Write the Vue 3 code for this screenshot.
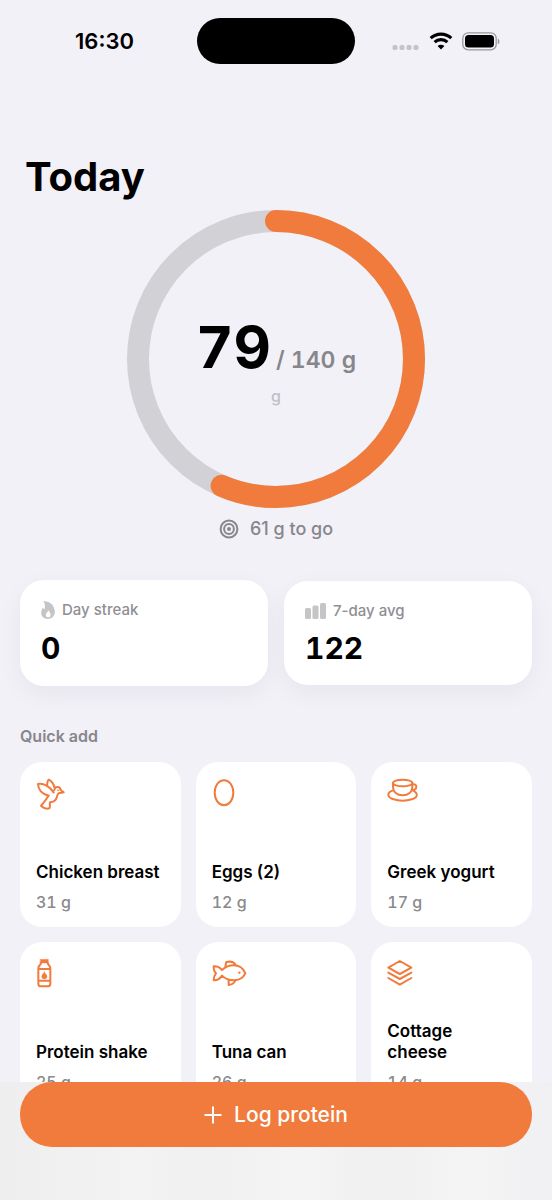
<script setup>
const eaten = 79
const goal = 140
const radius = 138
const circumference = 2 * Math.PI * radius
const dash = `${(circumference * eaten) / goal} ${circumference}`

const foods = [
  { name: 'Chicken breast', grams: 31, icon: 'bird' },
  { name: 'Eggs (2)', grams: 12, icon: 'egg' },
  { name: 'Greek yogurt', grams: 17, icon: 'cup' },
  { name: 'Protein shake', grams: 25, icon: 'bottle' },
  { name: 'Tuna can', grams: 26, icon: 'fish' },
  { name: 'Cottage cheese', grams: 14, icon: 'layers' },
]
</script>

<template>
  <div class="screen">
    <header class="status">
      <time class="clock">16:30</time>
      <div class="island"></div>
      <div class="signals">
        <svg class="dots" viewBox="0 0 28 6" aria-hidden="true">
          <rect x="0.5" y="1" width="5" height="5" rx="1.8" />
          <rect x="7.5" y="1" width="5" height="5" rx="1.8" />
          <rect x="14.5" y="1" width="5" height="5" rx="1.8" />
          <rect x="21.5" y="1" width="5" height="5" rx="1.8" />
        </svg>
        <svg class="wifi" viewBox="0 0 24 18" aria-hidden="true">
          <path d="M1.7 6.2a15 15 0 0 1 20.6 0M5.6 10.2a9.3 9.3 0 0 1 12.8 0" fill="none" stroke="#000" stroke-width="3.1" />
          <path d="M12 17.4 8.6 14a4.9 4.9 0 0 1 6.8 0z" />
        </svg>
        <svg class="battery" viewBox="0 0 38 19" aria-hidden="true">
          <rect x="0.8" y="0.8" width="33.4" height="17" rx="5.4" fill="none" stroke="#98979b" stroke-width="1.3" />
          <rect x="3" y="3" width="29" height="12.6" rx="3.6" />
          <path d="M35.8 6.4c2.2.8 2.2 5 0 5.8z" fill="#98979b" />
        </svg>
      </div>
    </header>

    <main class="content">
      <h1>Today</h1>

      <section class="progress" aria-label="Protein today">
        <div class="ring">
          <svg viewBox="0 0 298 298" aria-hidden="true">
            <circle class="track" cx="149" cy="149" :r="radius" />
            <circle class="fill" cx="149" cy="149" :r="radius" :stroke-dasharray="dash" transform="rotate(-90 149 149)" />
          </svg>
          <div class="reading">
            <p class="amount"><strong>{{ eaten }}</strong><span>/ {{ goal }} g</span></p>
            <p class="unit">g</p>
          </div>
        </div>
        <p class="remaining">
          <svg viewBox="0 0 20 20" aria-hidden="true">
            <circle cx="10" cy="10" r="8.4" />
            <circle cx="10" cy="10" r="4.9" />
            <circle class="bull" cx="10" cy="10" r="2" />
          </svg>
          <span>{{ goal - eaten }} g to go</span>
        </p>
      </section>

      <section class="stats" aria-label="Statistics">
        <article class="stat">
          <p class="label">
            <svg class="flame" viewBox="0 0 14 18" aria-hidden="true">
              <path fill-rule="evenodd" d="M2.4.3C8.3-.3 13.6 4 13.8 10.6 13.9 15 11 17.9 7 17.9S.2 15.3.2 11.7C.2 9.3 1 7.6 2.2 6.4c.3 1 .7 1.5 1.5 1.9C4.2 5.4 4 2.5 2.4.3zM7.5 8.9c-.2 1.7-2.7 2.8-2.7 5a2.4 2.4 0 0 0 4.9.1c0-2.1-1.5-2.9-2.2-5.1z" />
            </svg>
            <span>Day streak</span>
          </p>
          <p class="value">0</p>
        </article>
        <article class="stat average">
          <p class="label">
            <svg class="bars" viewBox="0 0 21 16" aria-hidden="true">
              <rect x="0" y="5" width="6" height="11" rx="1.5" />
              <rect x="7.5" y="2.5" width="6" height="13.5" rx="1.5" />
              <rect x="15" y="0" width="6" height="16" rx="1.5" />
            </svg>
            <span>7-day avg</span>
          </p>
          <p class="value">122</p>
        </article>
      </section>

      <section class="quick">
        <h2>Quick add</h2>
        <div class="foods">
          <button v-for="food in foods" :key="food.name" type="button" class="food">
            <span class="icon">
              <svg v-if="food.icon === 'bird'" class="traced" width="30" height="32" viewBox="50 54 90 96" aria-hidden="true">
                <path d="M88 107C72 103 57 92 56 72c16-4 36 8 47 25M84 76c-1-7 0-13 4-17 9 5 15 12 17 23M105 90c1-11 17-13 19 0l9 7c-5 1-9 1-14 2-5 4-5 7-6 11-3 11-11 16-21 17-2 6 2 13-2 18-8 2-19-1-25-8 9-8 15-19 23-30" />
                <circle class="solid" cx="116" cy="91" r="2" />
              </svg>
              <svg v-else-if="food.icon === 'egg'" width="24" height="30" viewBox="0 0 24 30" aria-hidden="true">
                <path d="M12 2.2c5.2 0 9.3 5.3 9.3 12.500S17.2 27.200 12 27.200 2.700 21.900 2.700 14.700 6.800 2.200 12 2.200z" />
              </svg>
              <svg v-else-if="food.icon === 'cup'" class="traced" width="32" height="26" viewBox="70 54 96 78" aria-hidden="true">
                <ellipse cx="117" cy="69" rx="29" ry="10" />
                <path d="M88 69v10c0 17 12 27 29 27s29-10 29-27V69M146 74c6-3 12 0 12 6 0 7-6 10-14 10M88 91c-20 6-17 21-1 26 18 6 42 6 60 0 16-5 17-18 0-26" />
              </svg>
              <svg v-else-if="food.icon === 'bottle'" class="traced" width="17" height="30" viewBox="80 69 51 90" aria-hidden="true">
                <path class="solid" d="M93 73h24v11H93z" />
                <path d="M95 84c-1 7-8 7-8 16v46c0 5 3 8 8 8h20c5 0 8-3 8-8v-46c0-9-7-9-8-16M87 102h36M87 137h36" />
                <path class="solid" d="M105 110c1 5 8 8 8 14a8 8 0 0 1-16 0c0-6 7-9 8-14z" />
              </svg>
              <svg v-else-if="food.icon === 'fish'" class="traced" width="35" height="30" viewBox="67 71 105 90" aria-hidden="true">
                <path d="M97 107c10-9 21-14 35-14 16 0 28 7 35 24-7 15-19 21-35 21-14 0-25-4-35-14-6 9-14 15-25 14 0-9 2-15 7-21-6-7-8-12-7-21 11-1 19 4 25 11zM107 96l3-13c14-3 25 1 29 11M117 138v14c9-1 17-5 21-15" />
                <circle class="solid" cx="149" cy="115" r="3" />
              </svg>
              <svg v-else class="traced" width="26" height="30" viewBox="67 71 78 90" aria-hidden="true">
                <path d="M105.5 80 140 100l-34.5 19L71 100zM71 115l34.5 19L140 115M71 131l34.5 20L140 131" />
              </svg>
            </span>
            <span class="name">{{ food.name }}</span>
            <span class="grams">{{ food.grams }} g</span>
          </button>
        </div>
      </section>
    </main>

    <footer class="dock">
      <button type="button" class="log">
        <svg viewBox="0 0 18 18" aria-hidden="true"><path d="M9 1.3v15.4M1.3 9h15.4" /></svg>
        <span>Log protein</span>
      </button>
    </footer>
  </div>
</template>

<style>
html,
body {
  background: #f2f1f7;
}
</style>

<style scoped>
.screen {
  display: flex;
  flex-direction: column;
  height: 100vh;
  color: #000;
  background: #f2f1f7;
  font-family: Inter, "Liberation Sans", sans-serif;
}

h1,
h2,
p {
  margin: 0;
}

button {
  border: 0;
  font-family: inherit;
  cursor: pointer;
}

.status {
  flex: none;
  display: grid;
  grid-template-columns: 1fr 158px 1fr;
  align-items: center;
  height: 46px;
  padding-top: 18px;
}

.clock {
  justify-self: center;
  padding-left: 12px;
  font-size: 22px;
  line-height: 28px;
  font-weight: 600;
}

.island {
  height: 46px;
  border-radius: 23px;
  background: #000;
}

.signals {
  display: flex;
  align-items: center;
  justify-content: center;
  gap: 9px;
  padding-right: 16px;
}

.dots {
  width: 28px;
  height: 6px;
  margin-top: 12px;
  fill: #c4c3c9;
}

.wifi {
  width: 24px;
  height: 18px;
}

.battery {
  width: 38px;
  height: 19px;
}

.content {
  flex: 1;
  min-height: 0;
  overflow: auto;
  scrollbar-width: none;
  padding: 88px 20px 24px;
}

h1 {
  padding-left: 5px;
  font-size: 40px;
  line-height: 50px;
  font-weight: 700;
}

.progress {
  display: flex;
  flex-direction: column;
  align-items: center;
  padding-top: 8px;
}

.ring {
  display: grid;
  place-items: center;
}

.ring > * {
  grid-area: 1 / 1;
}

.ring svg {
  display: block;
  width: 298px;
  height: 298px;
  fill: none;
  stroke-width: 22px;
}

.track {
  stroke: #d2d1d6;
}

.fill {
  stroke: #f07b3c;
  stroke-linecap: round;
}

.reading {
  padding-top: 8px;
  text-align: center;
}

.amount {
  display: flex;
  align-items: baseline;
  gap: 5px;
  color: #87868b;
  font-size: 23px;
  line-height: 52px;
  font-weight: 600;
  font-variant-numeric: tabular-nums;
}

.amount strong {
  color: #000;
  font-size: 58px;
  font-weight: 700;
}

.unit {
  color: #c0bfc5;
  font-size: 16px;
  line-height: 20px;
  font-weight: 500;
}

.remaining {
  display: flex;
  align-items: center;
  gap: 11px;
  padding-top: 8px;
  color: #87868b;
  font-size: 18px;
  line-height: 26px;
  font-weight: 500;
}

.remaining svg {
  width: 20px;
  height: 20px;
  fill: none;
  stroke: #87868b;
  stroke-width: 2px;
}

.remaining .bull {
  fill: #87868b;
  stroke: none;
}

.stats {
  display: grid;
  grid-template-columns: 1fr 1fr;
  align-items: center;
  gap: 16px;
  padding-top: 38px;
}

.stat {
  padding: 20px 21px;
  border-radius: 24px;
  background: #fff;
  box-shadow: 0 8px 24px rgba(30, 20, 60, 0.05);
}

.label {
  display: flex;
  align-items: center;
  gap: 7px;
  color: #8f8e92;
  font-size: 15px;
  line-height: 20px;
  font-weight: 500;
}

.label svg {
  fill: #c5c4c6;
}

.flame {
  width: 14px;
  height: 18px;
}

.bars {
  width: 21px;
  height: 16px;
}

.value {
  padding-top: 10px;
  font-size: 30px;
  line-height: 36px;
  font-weight: 700;
  font-variant-numeric: tabular-nums;
}

.average .value {
  line-height: 34px;
}

.quick {
  padding-top: 40px;
}

h2 {
  color: #87868b;
  font-size: 16px;
  line-height: 20px;
  font-weight: 600;
}

.foods {
  display: grid;
  grid-template-columns: repeat(3, 1fr);
  gap: 15px;
  padding-top: 16px;
}

.food {
  display: flex;
  flex-direction: column;
  align-items: flex-start;
  min-height: 165px;
  padding: 16px 18px 15px 16px;
  border-radius: 22px;
  color: #000;
  background: #fff;
  text-align: left;
}

.icon svg {
  display: block;
  fill: none;
  stroke: #f07b3c;
  stroke-width: 2px;
  stroke-linecap: round;
  stroke-linejoin: round;
}

.icon .traced {
  stroke-width: 6px;
}

.icon .solid {
  fill: #f07b3c;
  stroke-width: 1px;
}

.name {
  margin-top: auto;
  font-size: 17px;
  line-height: 21px;
  font-weight: 600;
}

.grams {
  padding-top: 9px;
  color: #8a898c;
  font-size: 16px;
  line-height: 20px;
  font-weight: 500;
  font-variant-numeric: tabular-nums;
}

.dock {
  flex: none;
  padding: 0 20px 53px;
  background: linear-gradient(90deg, #eeeeef, #f3f3f3 25%, #f1f0f0 35%, #f4f4f4 55%, #f1f0f0 68%, #f4f4f4 86%, #f0eff2);
}

.log {
  display: flex;
  align-items: center;
  justify-content: center;
  gap: 12px;
  width: 100%;
  height: 65px;
  border-radius: 32px;
  color: #fff;
  background: #f07b3c;
  font-size: 21px;
  line-height: 26px;
  font-weight: 500;
}

.log svg {
  width: 18px;
  height: 18px;
  fill: none;
  stroke: #fff;
  stroke-width: 2px;
  stroke-linecap: round;
}
</style>
